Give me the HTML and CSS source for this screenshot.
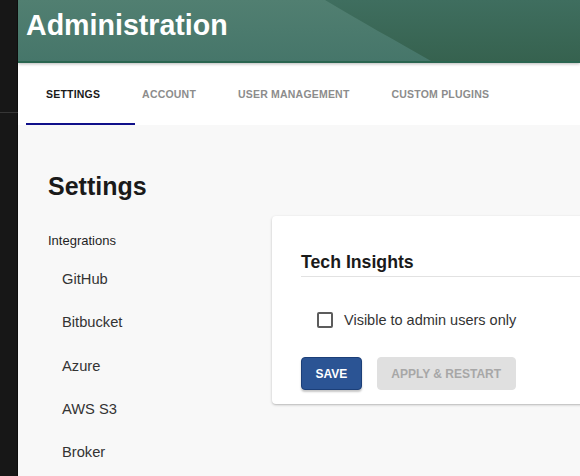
FILE: index.html
```html
<!DOCTYPE html>
<html>
<head>
<meta charset="utf-8">
<link rel="stylesheet" href="styles.css">
</head>
<body>
<div class="app">
  <aside class="sidebar"><div class="sidebar-divider"></div></aside>
  <main class="main">
    <header class="header">
      <h1 class="title">Administration</h1>
    </header>
    <nav class="tabs">
      <div class="tab active">SETTINGS</div>
      <div class="tab">ACCOUNT</div>
      <div class="tab">USER MANAGEMENT</div>
      <div class="tab">CUSTOM PLUGINS</div>
    </nav>
    <section class="content">
      <h2 class="page-title">Settings</h2>
      <div class="layout">
        <div class="nav">
          <div class="nav-group">Integrations</div>
          <div class="nav-item">GitHub</div>
          <div class="nav-item">Bitbucket</div>
          <div class="nav-item">Azure</div>
          <div class="nav-item">AWS S3</div>
          <div class="nav-item">Broker</div>
        </div>
        <div class="card">
          <h3 class="card-title">Tech Insights</h3>
          <label class="check-row">
            <input type="checkbox" class="checkbox">
            <span class="check-label">Visible to admin users only</span>
          </label>
          <div class="actions">
            <button class="btn btn-primary">SAVE</button>
            <button class="btn btn-disabled">APPLY &amp; RESTART</button>
          </div>
        </div>
      </div>
    </section>
  </main>
</div>
</body>
</html>
```
FILE: styles.css
```css
html, body {
  margin: 0;
  padding: 0;
  height: 100%;
  overflow: hidden;
}
body {
  font-family: "Liberation Sans", Arial, sans-serif;
  background: #f8f8f8;
}
.app {
  display: flex;
  height: 476px;
}
.sidebar {
  width: 18px;
  flex-shrink: 0;
  background: #171717;
  box-shadow: inset -1px 0 0 #0e0e0e;
}
.sidebar-divider {
  margin-top: 112px;
  height: 1px;
  background: #363636;
}
.main {
  flex: 1;
  min-width: 0;
  overflow: hidden;
  background: #f8f8f8;
  display: flex;
  flex-direction: column;
}
.header {
  position: relative;
  height: 61px;
  flex-shrink: 0;
  background: linear-gradient(180deg, #3f6e5f 0%, #36624f 100%);
  border-bottom: 2px solid #2a6550;
  box-shadow: 0 1px 3px rgba(0, 0, 0, 0.28);
  z-index: 2;
  overflow: hidden;
}
.header::before {
  content: "";
  position: absolute;
  left: 0;
  top: 0;
  width: 100%;
  height: 100%;
  background: linear-gradient(180deg, #517f71 0%, #46766a 100%);
  clip-path: path('M0 0 H307 C340 20 380 42 413 61 H0 Z');
}
.title {
  position: relative;
  margin: 0;
  padding: 11px 0 0 8px;
  font-size: 28.6px;
  line-height: 1;
  font-weight: 700;
  color: #ffffff;
}
.tabs {
  position: relative;
  z-index: 1;
  height: 62px;
  flex-shrink: 0;
  background: #ffffff;
  display: flex;
  align-items: center;
  padding-left: 7px;
}
.tab {
  position: relative;
  height: 62px;
  display: flex;
  align-items: center;
  padding: 0 21px;
  font-size: 10.5px;
  font-weight: 700;
  letter-spacing: 0.2px;
  color: #8c8c8c;
}
.tab.active {
  color: #1a1a1a;
}
.tab.active::after {
  content: "";
  position: absolute;
  left: 1px;
  bottom: 0;
  width: 109px;
  height: 2px;
  background: #10108a;
}
.content {
  padding-left: 30px;
}
.page-title {
  margin: 49px 0 0 0;
  font-size: 25px;
  line-height: 1;
  font-weight: 700;
  color: #1a1a1a;
}
.layout {
  display: flex;
  align-items: flex-start;
  margin-top: 17px;
}
.nav {
  width: 224px;
  flex-shrink: 0;
  padding-top: 15px;
}
.nav-group {
  font-size: 13px;
  line-height: 20px;
  color: #1f1f1f;
  margin-bottom: 7px;
}
.nav-item {
  height: 43.3px;
  line-height: 43.3px;
  padding-left: 14px;
  font-size: 14.7px;
  color: #333333;
}
.card {
  width: 420px;
  flex-shrink: 0;
  background: #ffffff;
  border-radius: 4px;
  box-shadow: 0 1px 3px rgba(0, 0, 0, 0.2), 0 1px 1px rgba(0, 0, 0, 0.08);
  padding: 35px 0 14px 29px;
  box-sizing: border-box;
}
.card-title {
  margin: 0;
  font-size: 17.7px;
  line-height: 22px;
  font-weight: 700;
  color: #1a1a1a;
  padding-bottom: 3px;
  border-bottom: 1px solid #e2e2e2;
}
.check-row {
  display: flex;
  align-items: center;
  height: 42px;
  margin-top: 22px;
  padding-left: 16px;
}
.checkbox {
  appearance: none;
  -webkit-appearance: none;
  margin: 0;
  width: 16px;
  height: 16px;
  border: 2px solid #5c5c5c;
  border-radius: 2px;
  box-sizing: border-box;
  background: #fff;
}
.check-label {
  margin-left: 11px;
  font-size: 14.5px;
  color: #333333;
}
.actions {
  display: flex;
  gap: 15px;
  margin-top: 16px;
}
.btn {
  height: 33px;
  padding: 0 13.5px;
  border-radius: 4px;
  font-family: "Liberation Sans", Arial, sans-serif;
  font-size: 12px;
  font-weight: 700;
  box-sizing: border-box;
}
.btn-primary {
  background: #2b5494;
  color: #ffffff;
  border: 1px solid #1c3f78;
  box-shadow: 0 2px 2px rgba(0, 0, 0, 0.22);
}
.btn-disabled {
  background: #e0e0e0;
  color: #a7a7a7;
  border: 1px solid #e0e0e0;
}
```
